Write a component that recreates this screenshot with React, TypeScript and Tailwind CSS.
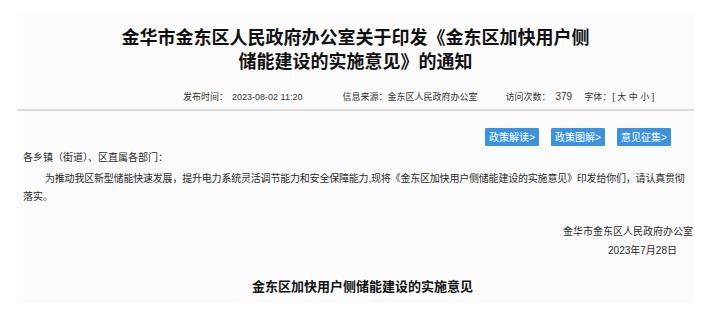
const cjk = "font-['Liberation_Sans','Noto_Sans_CJK_SC',sans-serif]";

const buttons = ['政策解读>', '政策图解>', '意见征集>'];

export default function App() {
  return (
    <div className={`w-[715px] h-[317px] bg-white pt-[13px] pl-[17px] pr-[21px] ${cjk}`}>
      <div className="h-[290px] bg-[#fbfbfb] pt-[13px]">
        {/* Title */}
        <h1 className="w-[480px] mx-auto text-center text-[18px] leading-[24px] font-bold text-[#111]">
          金华市金东区人民政府办公室关于印发《金东区加快用户侧储能建设的实施意见》的通知
        </h1>

        {/* Meta */}
        <div className="mt-[16px] flex items-center pl-[166px] text-[9px] leading-[14px] text-[#333]">
          <span>发布时间：</span>
          <span className="ml-[4px]">2023-08-02 11:20</span>
          <span className="ml-[40px]">信息来源：</span>
          <span>金东区人民政府办公室</span>
          <span className="ml-[28px]">访问次数：</span>
          <span className="ml-[5px] text-[10px]">379</span>
          <span className="ml-[12px]">字体：</span>
          <span className="ml-[1px]">[ 大 中 小 ]</span>
        </div>

        <div className="mt-[5px] h-[2px] bg-[#dcdcdc]" />

        {/* Buttons */}
        <div className="mt-[17px] flex justify-end gap-[12px] pr-[23px]">
          {buttons.map((b) => (
            <a
              key={b}
              className="w-[54px] h-[18px] flex items-center justify-center bg-[#3b93dd] text-white text-[10px] rounded-[1px]"
            >
              {b}
            </a>
          ))}
        </div>

        {/* Body */}
        <div className="pl-[6px] text-[10px] leading-[18px] text-[#2a2a2a]">
          <p className="mt-[3px]">各乡镇（街道）、区直属各部门：</p>
          <p className="mt-[3px] indent-[22px]">
            <span className="whitespace-nowrap tracking-[-0.2px]">
              为推动我区新型储能快速发展，提升电力系统灵活调节能力和安全保障能力,现将《金东区加快用户侧储能建设的实施意见》印发给你们，请认真贯彻
            </span>
            <br />
            落实。
          </p>
        </div>

        <div className="mt-[17px] text-right text-[10px] leading-[18px] text-[#2a2a2a]">
          <p className="pr-[1px]">金华市金东区人民政府办公室</p>
          <p className="mt-[1px] pr-[17px]">2023年7月28日</p>
        </div>

        <h2 className="mt-[18px] text-center text-[13px] leading-[18px] font-bold text-[#111] pl-[14px]">
          金东区加快用户侧储能建设的实施意见
        </h2>
      </div>
    </div>
  );
}
